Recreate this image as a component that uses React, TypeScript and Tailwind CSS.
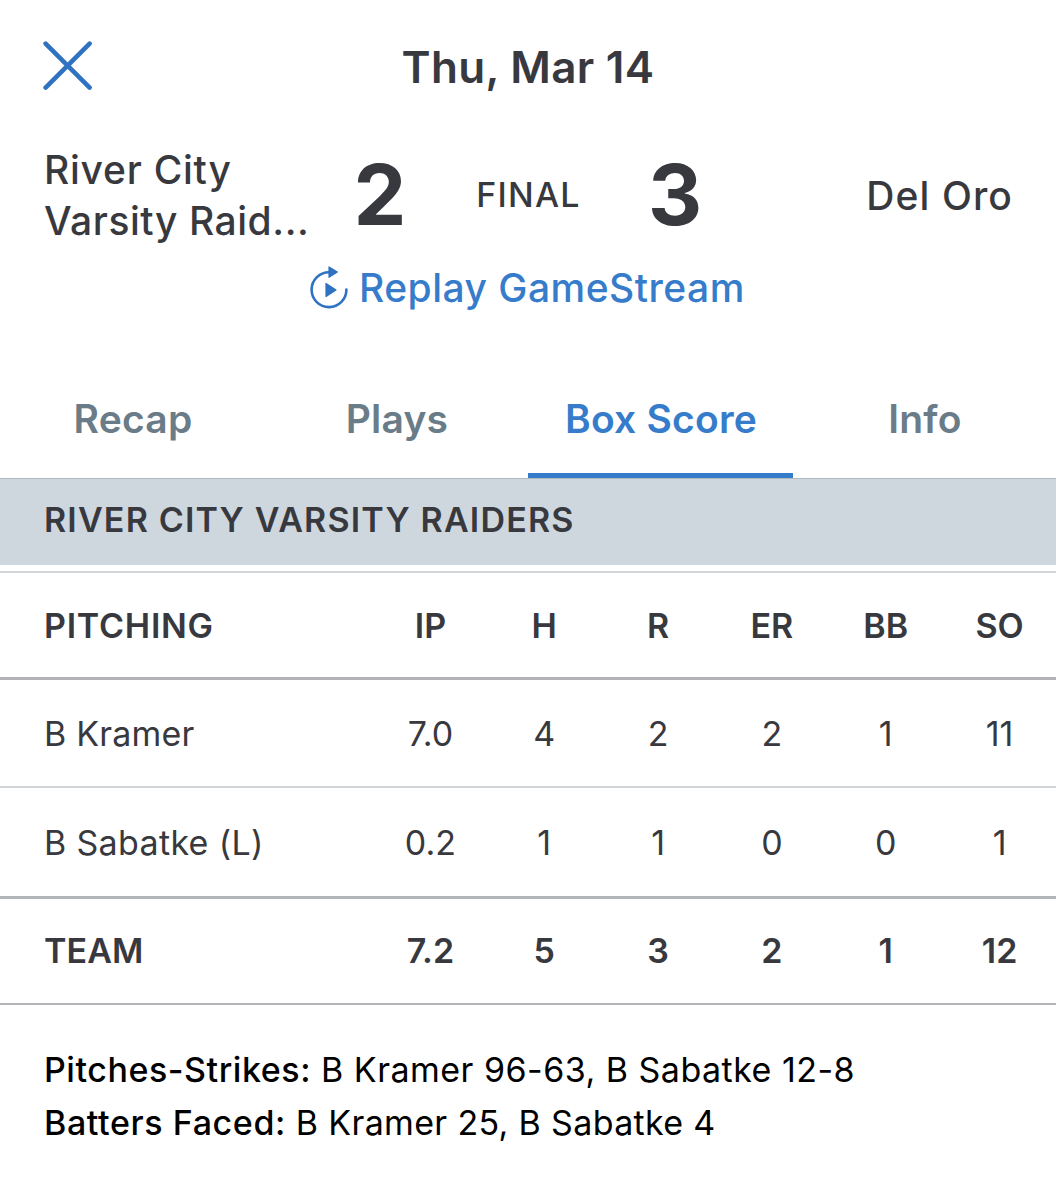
const tabs = ['Recap', 'Plays', 'Box Score', 'Info'];

const columns = ['IP', 'H', 'R', 'ER', 'BB', 'SO'];

const pitchers = [
    { name: 'B Kramer', stats: ['7.0', '4', '2', '2', '1', '11'], tracking: 'tracking-[0.2px]', row: 'h-[108px] pt-0.5 border-b-2 border-[#d2d5d8]' },
    { name: 'B Sabatke (L)', stats: ['0.2', '1', '1', '0', '0', '1'], tracking: 'tracking-[0.33px]', row: 'h-[111px] pt-0.5 border-b-[3px] border-[#b1b6bb]' },
];

const team = ['7.2', '5', '3', '2', '1', '12'];

function CloseIcon() {
    return (
        <svg className="w-[50px] h-[50px]" viewBox="0 0 50 50" fill="none" stroke="#2f72c2" strokeWidth="4.6" strokeLinecap="round">
            <path d="M2.6 2.6L46.6 46.6M46.6 2.6L2.6 46.6" />
        </svg>
    );
}

function ReplayIcon() {
    return (
        <svg className="w-[38px] h-[44px]" viewBox="0 0 38 44" fill="none">
            <path d="M36.4 23.5A17.4 17.4 0 1 1 19 6.3" stroke="#2f72c2" strokeWidth="2.6" strokeLinecap="round" />
            <path d="M19 0.9V11.3L27.4 6.1Z" fill="#2f72c2" stroke="#2f72c2" strokeWidth="1.2" strokeLinejoin="round" />
            <path d="M16 17.4V30.6L26 24Z" fill="#2f72c2" stroke="#2f72c2" strokeWidth="1.2" strokeLinejoin="round" />
        </svg>
    );
}

function StatRow({ label, stats, className, labelClass }: { label: string; stats: string[]; className: string; labelClass: string }) {
    return (
        <div className={`grid grid-cols-[373px_repeat(6,1fr)] items-center ${className}`}>
            <span className={`pl-11 ${labelClass}`}>{label}</span>
            {stats.map((stat, i) => (
                <span key={i} className="pl-px text-center">{stat}</span>
            ))}
        </div>
    );
}

export default function App() {
    return (
        <div className="w-[1056px] h-[1200px] overflow-hidden bg-white text-[#38393e] font-['Inter',sans-serif]">
            {/* Header */}
            <header className="grid grid-cols-[1fr_auto_1fr] items-center h-[133px] px-[43px]">
                <button aria-label="Close" className="justify-self-start pb-px"><CloseIcon /></button>
                <h1 className="text-[44px] leading-none font-semibold tracking-[0.3px]">Thu, Mar 14</h1>
            </header>

            {/* Score line */}
            <section className="grid grid-cols-[268px_136px_160px_136px_1fr] items-center h-[102px] mt-[11px] pl-11 pr-[43px] text-[39px] leading-[51px] font-medium">
                <div>
                    <div className="tracking-[0.75px]">River City</div>
                    <div className="tracking-[0.55px]">Varsity Raid...</div>
                </div>
                <span className="text-center text-[84px] leading-none font-bold">2</span>
                <span className="pl-px text-center text-[34px] leading-none tracking-[1.2px]">FINAL</span>
                <span className="pr-[2px] text-center text-[84px] leading-none font-bold">3</span>
                <span className="text-right tracking-[1.1px]">Del Oro</span>
            </section>

            <button className="flex items-center gap-[11px] h-[51px] mt-4 ml-[310px] text-[#367ccb]">
                <ReplayIcon />
                <span className="text-[39px] leading-none font-medium tracking-[0.48px]">Replay GameStream</span>
            </button>

            {/* Tabs */}
            <nav className="grid grid-cols-4 h-[118px] mt-[47px]">
                {tabs.map((tab) => (
                    <button
                        key={tab}
                        className={`relative pl-0.5 text-[39px] font-semibold tracking-[0.2px] ${tab === 'Box Score' ? 'text-[#367ccb]' : 'text-[#6b7c89]'}`}
                    >
                        {tab}
                        {tab === 'Box Score' && <span className="absolute left-0 -right-px bottom-0 h-[5px] bg-[#367ccb]" />}
                    </button>
                ))}
            </nav>

            <h2 className="flex items-center h-[87px] pb-1.5 pl-11 bg-[#cfd7de] border-t border-[#b1b9c0] text-[34px] font-semibold tracking-[1.18px]">
                RIVER CITY VARSITY RAIDERS
            </h2>

            {/* Pitching table */}
            <div className="mt-1.5 border-t-2 border-[#d2d6d9] text-[34px] leading-none">
                <StatRow label="PITCHING" stats={columns} labelClass="tracking-[0.75px]" className="h-[107px] pt-0.5 border-b-[3px] border-[#b1b3b9] font-semibold" />
                {pitchers.map((p) => (
                    <StatRow key={p.name} label={p.name} stats={p.stats} labelClass={p.tracking} className={p.row} />
                ))}
                <StatRow label="TEAM" stats={team} labelClass="tracking-[0.1px]" className="h-[106px] border-b-2 border-[#b3b5b8] font-semibold" />
            </div>

            <div className="pt-[38px] pl-11 text-[34px] leading-[53px] text-black">
                <p className="tracking-[0.48px]">
                    <span className="font-medium tracking-[0.55px]">Pitches-Strikes:</span> B Kramer 96-63, B Sabatke 12-8
                </p>
                <p className="tracking-[0.34px]">
                    <span className="font-medium tracking-[0.6px]">Batters Faced:</span> B Kramer 25, B Sabatke 4
                </p>
            </div>
        </div>
    );
}
